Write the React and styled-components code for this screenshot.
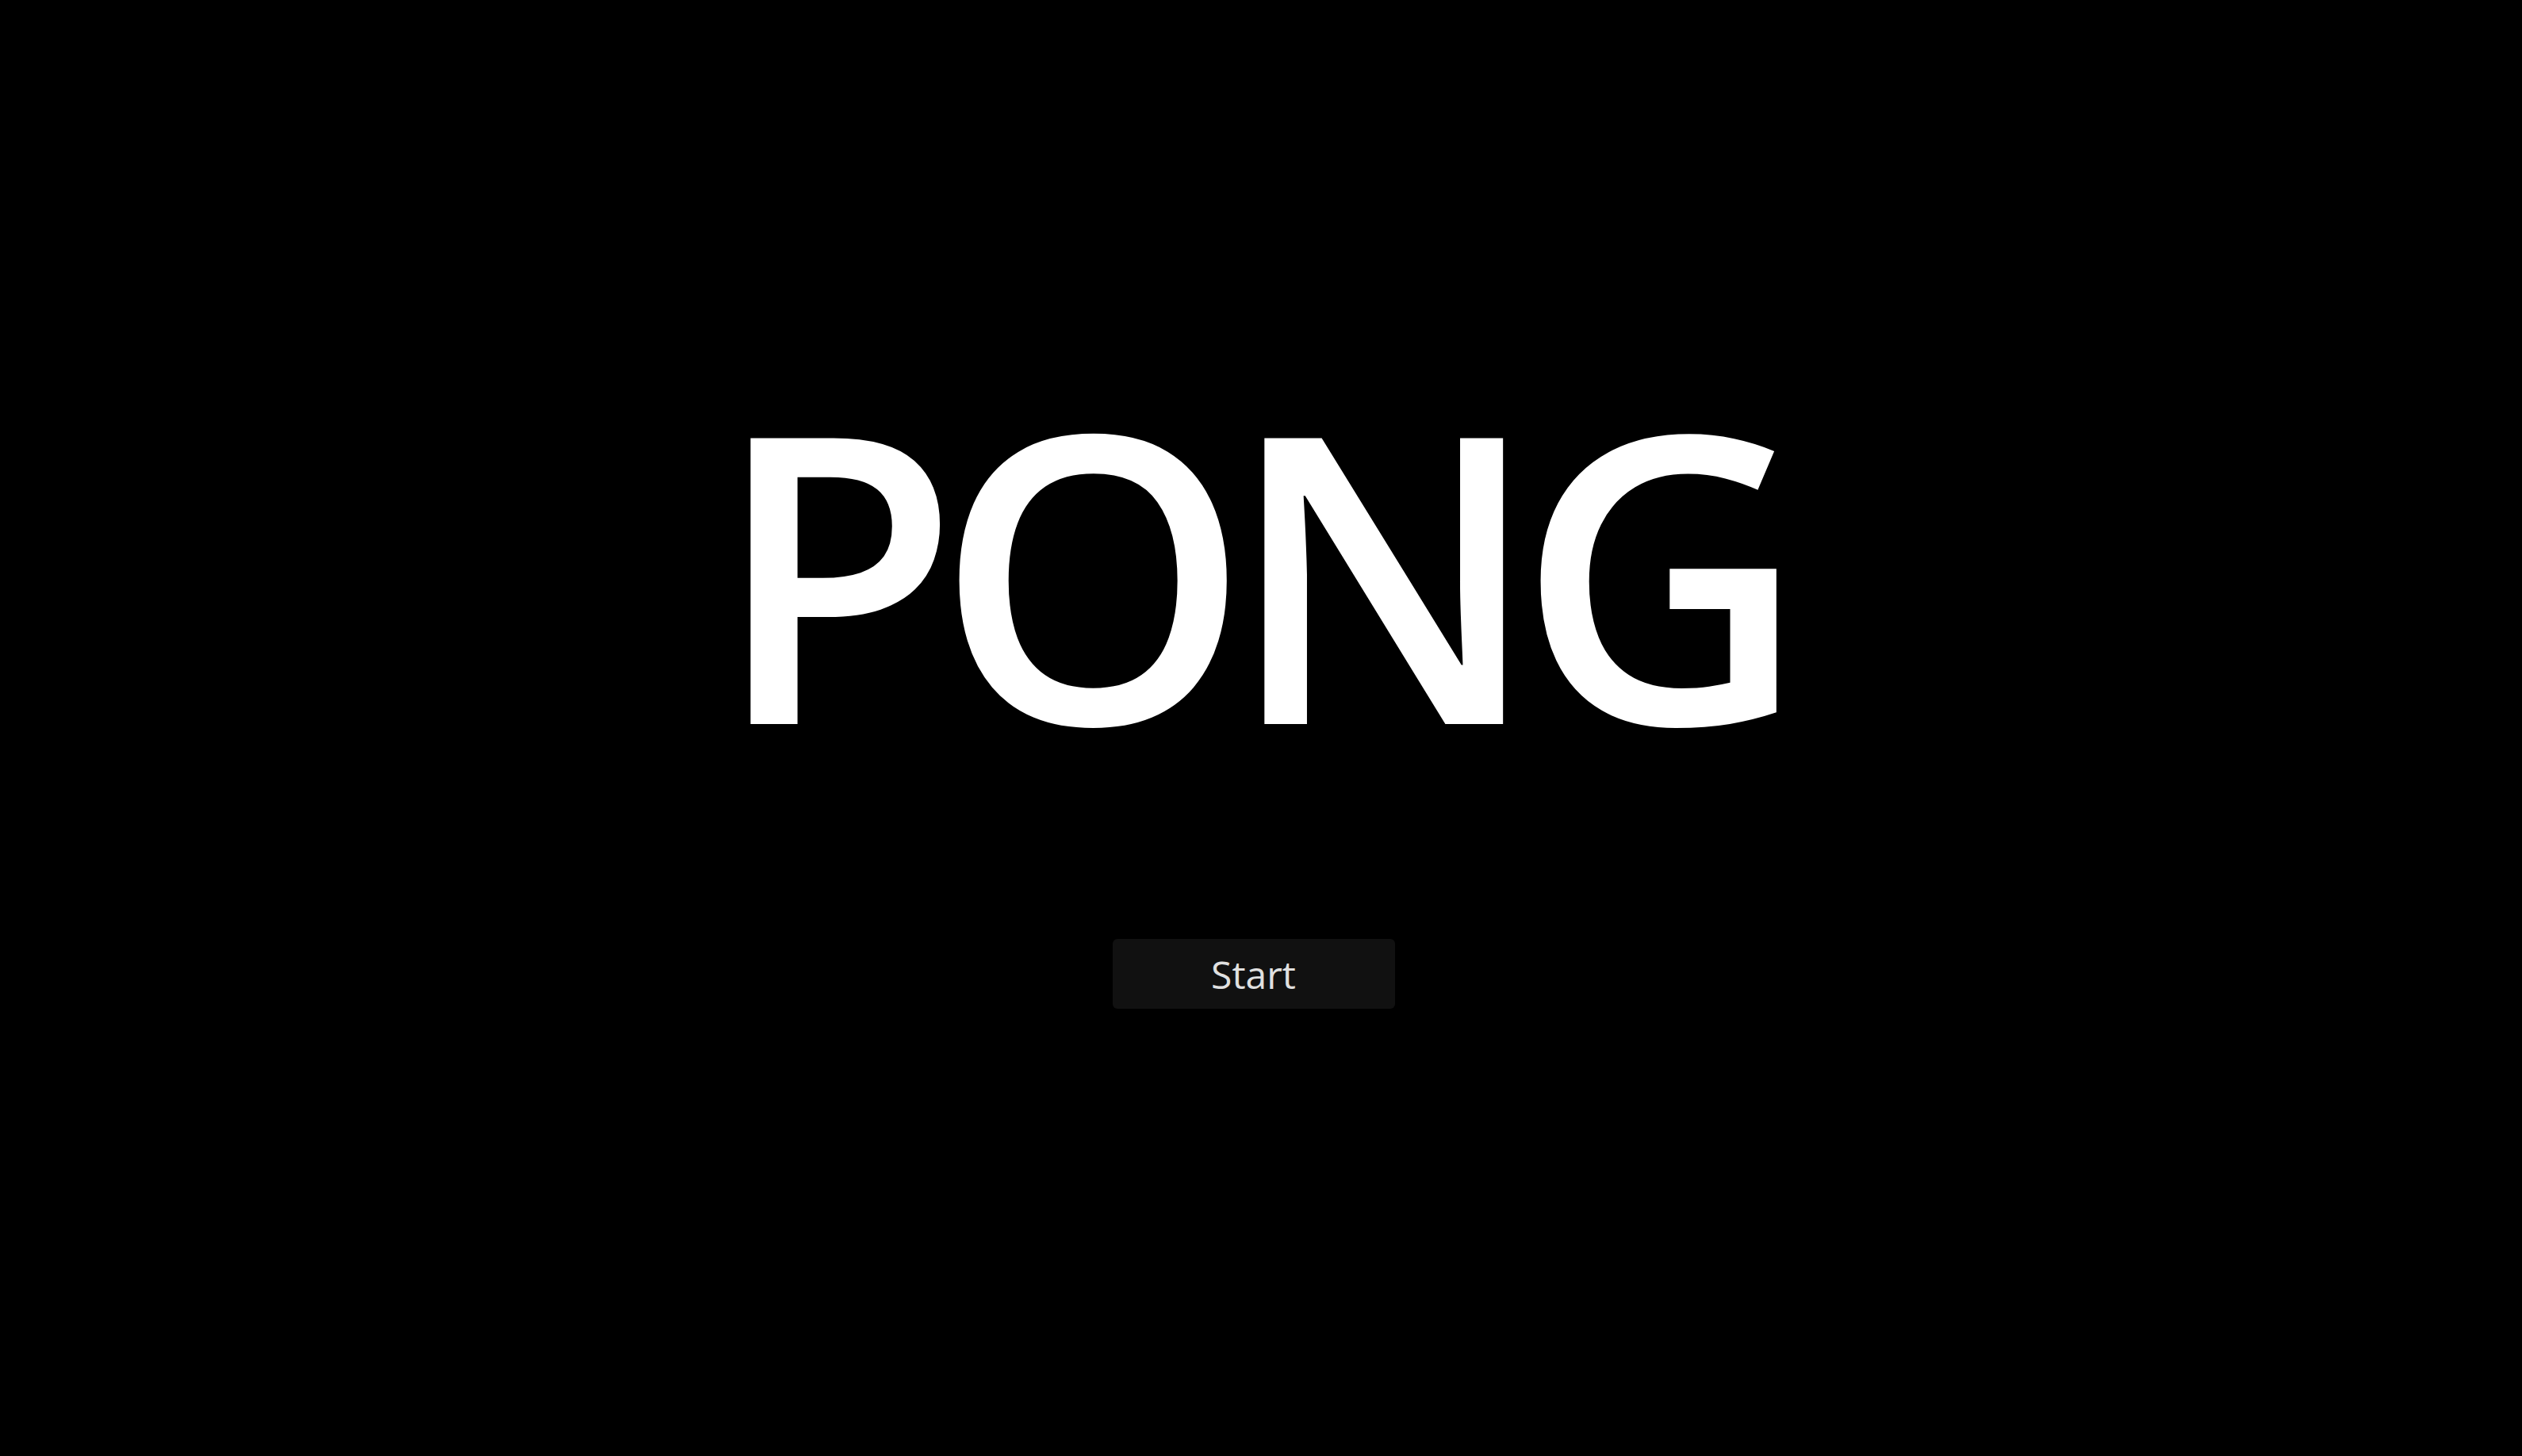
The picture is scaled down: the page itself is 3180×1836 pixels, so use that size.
import React from 'react';
import styled, { createGlobalStyle } from 'styled-components';

const GlobalStyle = createGlobalStyle`
  html, body {
    margin: 0;
    padding: 0;
    background: #000;
  }
  body {
    font-family: "Open Sans", "Liberation Sans", sans-serif;
  }
`;

const Screen = styled.div`
  width: 100vw;
  height: 100vh;
  background: #000;
  display: flex;
  flex-direction: column;
  align-items: center;
  overflow: hidden;
`;

const Title = styled.h1`
  margin: 0 32px 0 0;
  padding-top: 407px;
  font-family: "Open Sans", sans-serif;
  font-weight: 600;
  font-size: 505px;
  line-height: 620px;
  height: 620px;
  letter-spacing: -30px;
  color: #fff;
`;

const StartButton = styled.button`
  margin-top: 157px;
  margin-right: 19px;
  width: 356px;
  height: 88px;
  border: none;
  border-radius: 6px;
  background: #111111;
  color: #e0e0e0;
  font-family: "Open Sans", sans-serif;
  font-weight: 500;
  font-size: 48px;
  cursor: pointer;
`;

const App = () => {
  return (
    <>
      <GlobalStyle />
      <Screen>
        <Title>PONG</Title>
        <StartButton>Start</StartButton>
      </Screen>
    </>
  );
};

export default App;
